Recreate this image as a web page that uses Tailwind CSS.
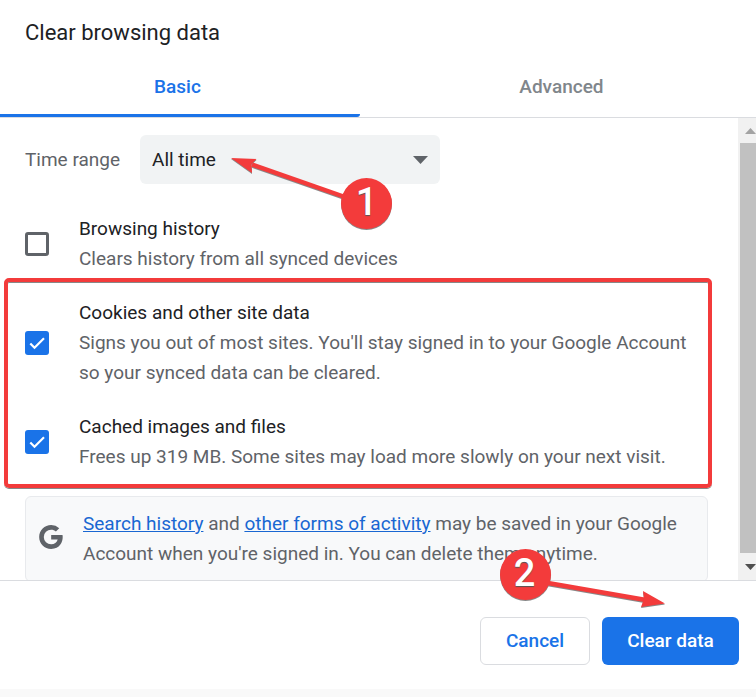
<!DOCTYPE html>
<html lang="en">
<head>
<meta charset="utf-8">
<meta name="viewport" content="width=device-width, initial-scale=1">
<title>Clear browsing data</title>
<script src="https://cdn.jsdelivr.net/npm/@tailwindcss/browser@4"></script>
</head>
<body class="min-h-screen bg-[#f9f9f9] font-[Roboto,'Liberation_Sans',sans-serif] text-[19px] leading-[30px] text-[#5f6368]">
<main class="relative bg-white">
  <h1 class="px-[25px] pt-[17px] pb-[11px] text-[22px] leading-8 text-[#202124]">Clear browsing data</h1>
  <div role="tablist" class="flex border-b border-[#dadce0] font-medium">
    <button role="tab" aria-selected="true" class="w-[47.6%] border-b-3 border-[#1a73e8] rounded-br-[3px] pt-3 pb-3 pr-[5px] text-[#1a73e8]">Basic</button>
    <button role="tab" aria-selected="false" class="flex-1 pt-3 pb-[15px] pl-[7px] text-[#80868b]">Advanced</button>
  </div>
  <div class="flex overflow-hidden">
    <div class="min-w-0 flex-1 pt-[17px]">
      <div class="mb-[18px] flex items-center px-[25px]">
        <label for="range" class="w-[115px]">Time range</label>
        <div class="relative">
          <select id="range" class="block h-[49px] w-[300px] appearance-none rounded-md bg-[#f1f3f4] px-3 text-[#202124]"><option>All time</option></select>
          <svg class="pointer-events-none absolute top-[21px] right-3 h-[8px] w-[15px]" viewBox="0 0 15 8"><path d="M0 0h15L7.500 8z" fill="#5f6368"/></svg>
        </div>
      </div>
      <div class="flex items-center py-3 pl-[25px]">
        <input id="history" type="checkbox" class="mr-[30px] size-6 shrink-0 appearance-none rounded-[3px] border-3 border-[#5f6368]">
        <label for="history"><span class="block text-[#202124]">Browsing history</span>Clears history from all synced devices</label>
      </div>
      <div class="relative">
        <div class="flex items-center py-3 pl-[25px]">
          <span class="relative mr-[30px] size-6 shrink-0">
            <input id="cookies" type="checkbox" checked class="block size-6 appearance-none rounded-[3px] bg-[#1a73e8]">
            <svg class="pointer-events-none absolute inset-0 size-6" viewBox="0 0 24 24" fill="none" stroke="#fff" stroke-width="2.200"><path d="M5.300 12.500l4.200 4.200L19 7.200"/></svg>
          </span>
          <label for="cookies"><span class="block text-[#202124]">Cookies and other site data</span>Signs you out of most sites. You'll stay signed in to your Google Account<br>so your synced data can be cleared.</label>
        </div>
        <div class="flex items-center py-3 pl-[25px]">
          <span class="relative mr-[30px] size-6 shrink-0">
            <input id="cache" type="checkbox" checked class="block size-6 appearance-none rounded-[3px] bg-[#1a73e8]">
            <svg class="pointer-events-none absolute inset-0 size-6" viewBox="0 0 24 24" fill="none" stroke="#fff" stroke-width="2.200"><path d="M5.300 12.500l4.200 4.200L19 7.200"/></svg>
          </span>
          <label for="cache"><span class="block text-[#202124]">Cached images and files</span>Frees up 319 MB. Some sites may load more slowly on your next visit.</label>
        </div>
        <div class="pointer-events-none absolute -top-2 right-[26px] -bottom-1 left-1 rounded-[5px] border-4 border-[#f33b3b] shadow-[0_1px_0_#888,inset_0_1px_0_#888]"></div>
      </div>
      <div class="mt-3 -mb-0.5 mr-[30px] ml-[25px] flex items-center rounded-md border border-[#e8eaed] bg-[#f8f9fa] py-3 pl-[13px]">
        <svg class="mr-5 mb-1 size-6 shrink-0" viewBox="2.400 2 20 20"><path fill="#5f6368" d="M12.545 10.239v3.821h5.445c-.712 2.315-2.647 3.972-5.445 3.972a6.033 6.033 0 1 1 0-12.064c1.498 0 2.866.549 3.921 1.453l2.814-2.814A9.969 9.969 0 0 0 12.545 2C7.021 2 2.543 6.477 2.543 12s4.478 10 10.002 10c8.396 0 10.249-7.850 9.426-11.748z"/></svg>
        <p><a href="#" class="text-[#1967d2] underline">Search history</a> and <a href="#" class="text-[#1967d2] underline">other forms of activity</a> may be saved in your Google<br>Account when you're signed in. You can delete them anytime.</p>
      </div>
    </div>
    <div class="flex w-[18px] flex-col bg-[#f1f1f1] pl-0.5" aria-hidden="true">
      <svg class="h-[25px] w-4" viewBox="0 0 16 25"><path d="M5 16l5.500-6 5.500 6z" fill="#a3a3a3"/></svg>
      <div class="flex-1 bg-[#c1c1c1]"></div>
      <svg class="h-[27px] w-4" viewBox="0 0 16 27"><path d="M5 11h11l-5.500 6z" fill="#505050"/></svg>
    </div>
  </div>
  <div class="flex justify-end gap-3 border-t border-[#dadce0] pt-9 pr-[17px] pb-6 font-medium">
    <button class="h-12 w-[110px] rounded-md border border-[#dadce0] text-[#1a73e8]">Cancel</button>
    <button class="h-12 w-[137px] rounded-md bg-[#1a73e8] text-white">Clear data</button>
  </div>
  <svg class="pointer-events-none absolute top-[150px] left-[225px] h-[85px] w-[175px] drop-shadow-[0_1px_0_#888]" viewBox="225 150 175 85">
    <path d="M345 197L252 164.500" stroke="#f33b3b" stroke-width="4.500"/><path d="M231 158l25.500 1-5 5 .5 9z" fill="#f33b3b"/>
    <circle cx="366.500" cy="203.500" r="25.500" fill="#f33b3b"/>
  </svg>
  <span class="absolute top-[177px] left-[341px] w-[51px] text-center text-[38px] leading-[50px] font-medium text-white [text-shadow:0_1px_1px_#555]">1</span>
  <svg class="pointer-events-none absolute top-[545px] left-[495px] h-[62px] w-[175px] drop-shadow-[0_1px_0_#888]" viewBox="495 545 175 62">
    <path d="M548 583L646 600" stroke="#f33b3b" stroke-width="4.500"/><path d="M665 603.500L643 591l1 8-3 8z" fill="#f33b3b"/>
    <circle cx="525.500" cy="574.500" r="25.500" fill="#f33b3b"/>
  </svg>
  <span class="absolute top-[548px] left-[499px] w-[51px] text-center text-[38px] leading-[50px] font-medium text-white [text-shadow:0_1px_1px_#555]">2</span>
</main>
</body>
</html>
